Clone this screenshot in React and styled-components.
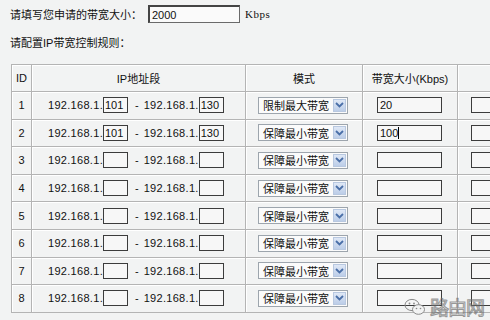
import styled, { createGlobalStyle } from "styled-components";

const GlobalStyle = createGlobalStyle`
  html, body {
    margin: 0;
    padding: 0;
    background: #f2f3f3;
    overflow: hidden;
    width: 490px;
    height: 320px;
  }
  body {
    font-family: "Liberation Sans", "Noto Sans CJK SC", sans-serif;
    font-size: 11px;
    color: #111;
  }
`;

const Page = styled.div`
  position: relative;
  width: 490px;
  height: 320px;
  overflow: hidden;
`;

const Intro = styled.div`
  padding: 5px 0 0 10px;
  display: flex;
  flex-direction: column;
`;

const FieldRow = styled.div`
  display: flex;
  align-items: center;
  height: 18px;
`;

const Label = styled.span`
  width: 138px;
  font-size: 11px;
`;

const TotalInput = styled.div`
  width: 92px;
  height: 18px;
  box-sizing: border-box;
  border: 1px solid #6a6a6a;
  border-top: 2px solid #444;
  border-left: 2px solid #444;
  background: #fafafa;
  font-size: 11px;
  padding-left: 2px;
  display: flex;
  align-items: center;
`;

const Unit = styled.span`
  margin-left: 5px;
  font-family: "Liberation Serif", "Noto Sans CJK SC", serif;
  font-size: 11px;
  letter-spacing: 0.5px;
`;

const Subtitle = styled.div`
  margin-top: 13px;
  height: 14px;
  line-height: 14px;
`;

const Table = styled.table`
  margin: 14px 0 0 11px;
  border-collapse: collapse;
  table-layout: fixed;
  width: 540px;
  border: 1px solid #a9a9a9;
`;

const Th = styled.th`
  font-weight: normal;
  height: 26px;
  border: 1px solid #b4b4b4;
  box-shadow: inset 1px 1px 0 #ffffff;
  text-align: center;
  font-size: 11px;
  padding: 0;
`;

const Td = styled.td`
  height: 26.6px;
  border: 1px solid #b4b4b4;
  box-shadow: inset 1px 1px 0 #ffffff;
  text-align: ${({ $align }) => $align || "center"};
  padding: 0;
  vertical-align: middle;
`;

const IpCell = styled.div`
  display: flex;
  align-items: center;
  padding-left: 16px;
  font-size: 11px;
`;

const IpPrefix = styled.span`
  letter-spacing: 0.3px;
`;

const Dash = styled.span`
  margin: 0 5px 0 7px;
`;

const OctetBox = styled.div`
  width: 25px;
  height: 16px;
  box-sizing: border-box;
  border: 1px solid #3c3c3c;
  background: #f7f7f7;
  font-size: 11px;
  padding-left: 1px;
  display: flex;
  align-items: center;
`;

const Select = styled.div`
  margin-left: 12px;
  width: 90px;
  height: 17px;
  box-sizing: border-box;
  border: 1px solid #9da5ad;
  background: #fbfbfb;
  display: flex;
  align-items: center;
  justify-content: space-between;
`;

const SelectText = styled.span`
  padding-left: 4px;
  font-size: 11px;
  color: #111;
`;

const Arrow = styled.span`
  width: 13px;
  height: 13px;
  margin-right: 1px;
  background: linear-gradient(#dfe8f6, #bccde8);
  border: 1px solid #b8c8e0;
  box-sizing: border-box;
  display: flex;
  align-items: center;
  justify-content: center;
`;

const RateBox = styled.div`
  margin-left: ${({ $left }) => $left}px;
  width: ${({ $w }) => $w}px;
  height: 16px;
  box-sizing: border-box;
  border: 1px solid #3c3c3c;
  background: #f7f7f7;
  font-size: 11px;
  padding-left: 2px;
  display: flex;
  align-items: center;
`;

const Caret = styled.span`
  display: inline-block;
  width: 1px;
  height: 12px;
  background: #000;
`;

const Watermark = styled.div`
  position: absolute;
  right: 6px;
  bottom: 3px;
  display: flex;
  align-items: center;
  gap: 4px;
  pointer-events: none;
`;

const MarkText = styled.span`
  font-family: "Noto Sans CJK SC", sans-serif;
  font-size: 19px;
  line-height: 20px;
  color: transparent;
  -webkit-text-stroke: 1px rgba(110, 110, 110, 0.7);
  letter-spacing: -1px;
`;

const rows = [
  { id: 1, from: "101", to: "130", mode: "限制最大带宽", rate: "20" },
  { id: 2, from: "101", to: "130", mode: "保障最小带宽", rate: "100", caret: true },
  { id: 3, mode: "保障最小带宽" },
  { id: 4, mode: "保障最小带宽" },
  { id: 5, mode: "保障最小带宽" },
  { id: 6, mode: "保障最小带宽" },
  { id: 7, mode: "保障最小带宽" },
  { id: 8, mode: "保障最小带宽" },
];

const Chevron = () => (
  <svg width="9" height="6" viewBox="0 0 9 6">
    <path d="M1 1 L4.5 4.5 L8 1" fill="none" stroke="#4a6fa8" strokeWidth="1.8" />
  </svg>
);

const WeChat = () => (
  <svg width="22" height="18" viewBox="0 0 22 18">
    <ellipse cx="8" cy="7" rx="7" ry="5.6" fill="none" stroke="#8a8a8a" strokeWidth="1" />
    <ellipse cx="14.5" cy="11.5" rx="6" ry="4.8" fill="#f2f3f3" stroke="#8a8a8a" strokeWidth="1" />
    <circle cx="5.5" cy="5.5" r="0.9" fill="#8a8a8a" />
    <circle cx="10" cy="5.5" r="0.9" fill="#8a8a8a" />
    <circle cx="12.5" cy="10.5" r="0.8" fill="#8a8a8a" />
    <circle cx="16.5" cy="10.5" r="0.8" fill="#8a8a8a" />
  </svg>
);

const App = () => {
  return (
    <Page>
      <GlobalStyle />
      <Intro>
        <FieldRow>
          <Label>请填写您申请的带宽大小：</Label>
          <TotalInput>2000</TotalInput>
          <Unit>Kbps</Unit>
        </FieldRow>
        <Subtitle>请配置IP带宽控制规则：</Subtitle>
      </Intro>
      <Table>
        <colgroup>
          <col style={{ width: 20 }} />
          <col style={{ width: 214 }} />
          <col style={{ width: 117 }} />
          <col style={{ width: 95 }} />
          <col style={{ width: 94 }} />
        </colgroup>
        <thead>
          <tr>
            <Th>ID</Th>
            <Th>IP地址段</Th>
            <Th>模式</Th>
            <Th>带宽大小(Kbps)</Th>
            <Th></Th>
          </tr>
        </thead>
        <tbody>
          {rows.map((row) => (
            <tr key={row.id}>
              <Td>{row.id}</Td>
              <Td $align="left">
                <IpCell>
                  <IpPrefix>192.168.1.</IpPrefix>
                  <OctetBox>{row.from}</OctetBox>
                  <Dash>-</Dash>
                  <IpPrefix>192.168.1.</IpPrefix>
                  <OctetBox>{row.to}</OctetBox>
                </IpCell>
              </Td>
              <Td $align="left">
                <Select>
                  <SelectText>{row.mode}</SelectText>
                  <Arrow>
                    <Chevron />
                  </Arrow>
                </Select>
              </Td>
              <Td $align="left">
                <RateBox $left={14} $w={65}>
                  {row.rate}
                  {row.caret && <Caret />}
                </RateBox>
              </Td>
              <Td $align="left">
                <RateBox $left={13} $w={65} />
              </Td>
            </tr>
          ))}
        </tbody>
      </Table>
      <Watermark>
        <WeChat />
        <MarkText>路由网</MarkText>
      </Watermark>
    </Page>
  );
};

export default App;
